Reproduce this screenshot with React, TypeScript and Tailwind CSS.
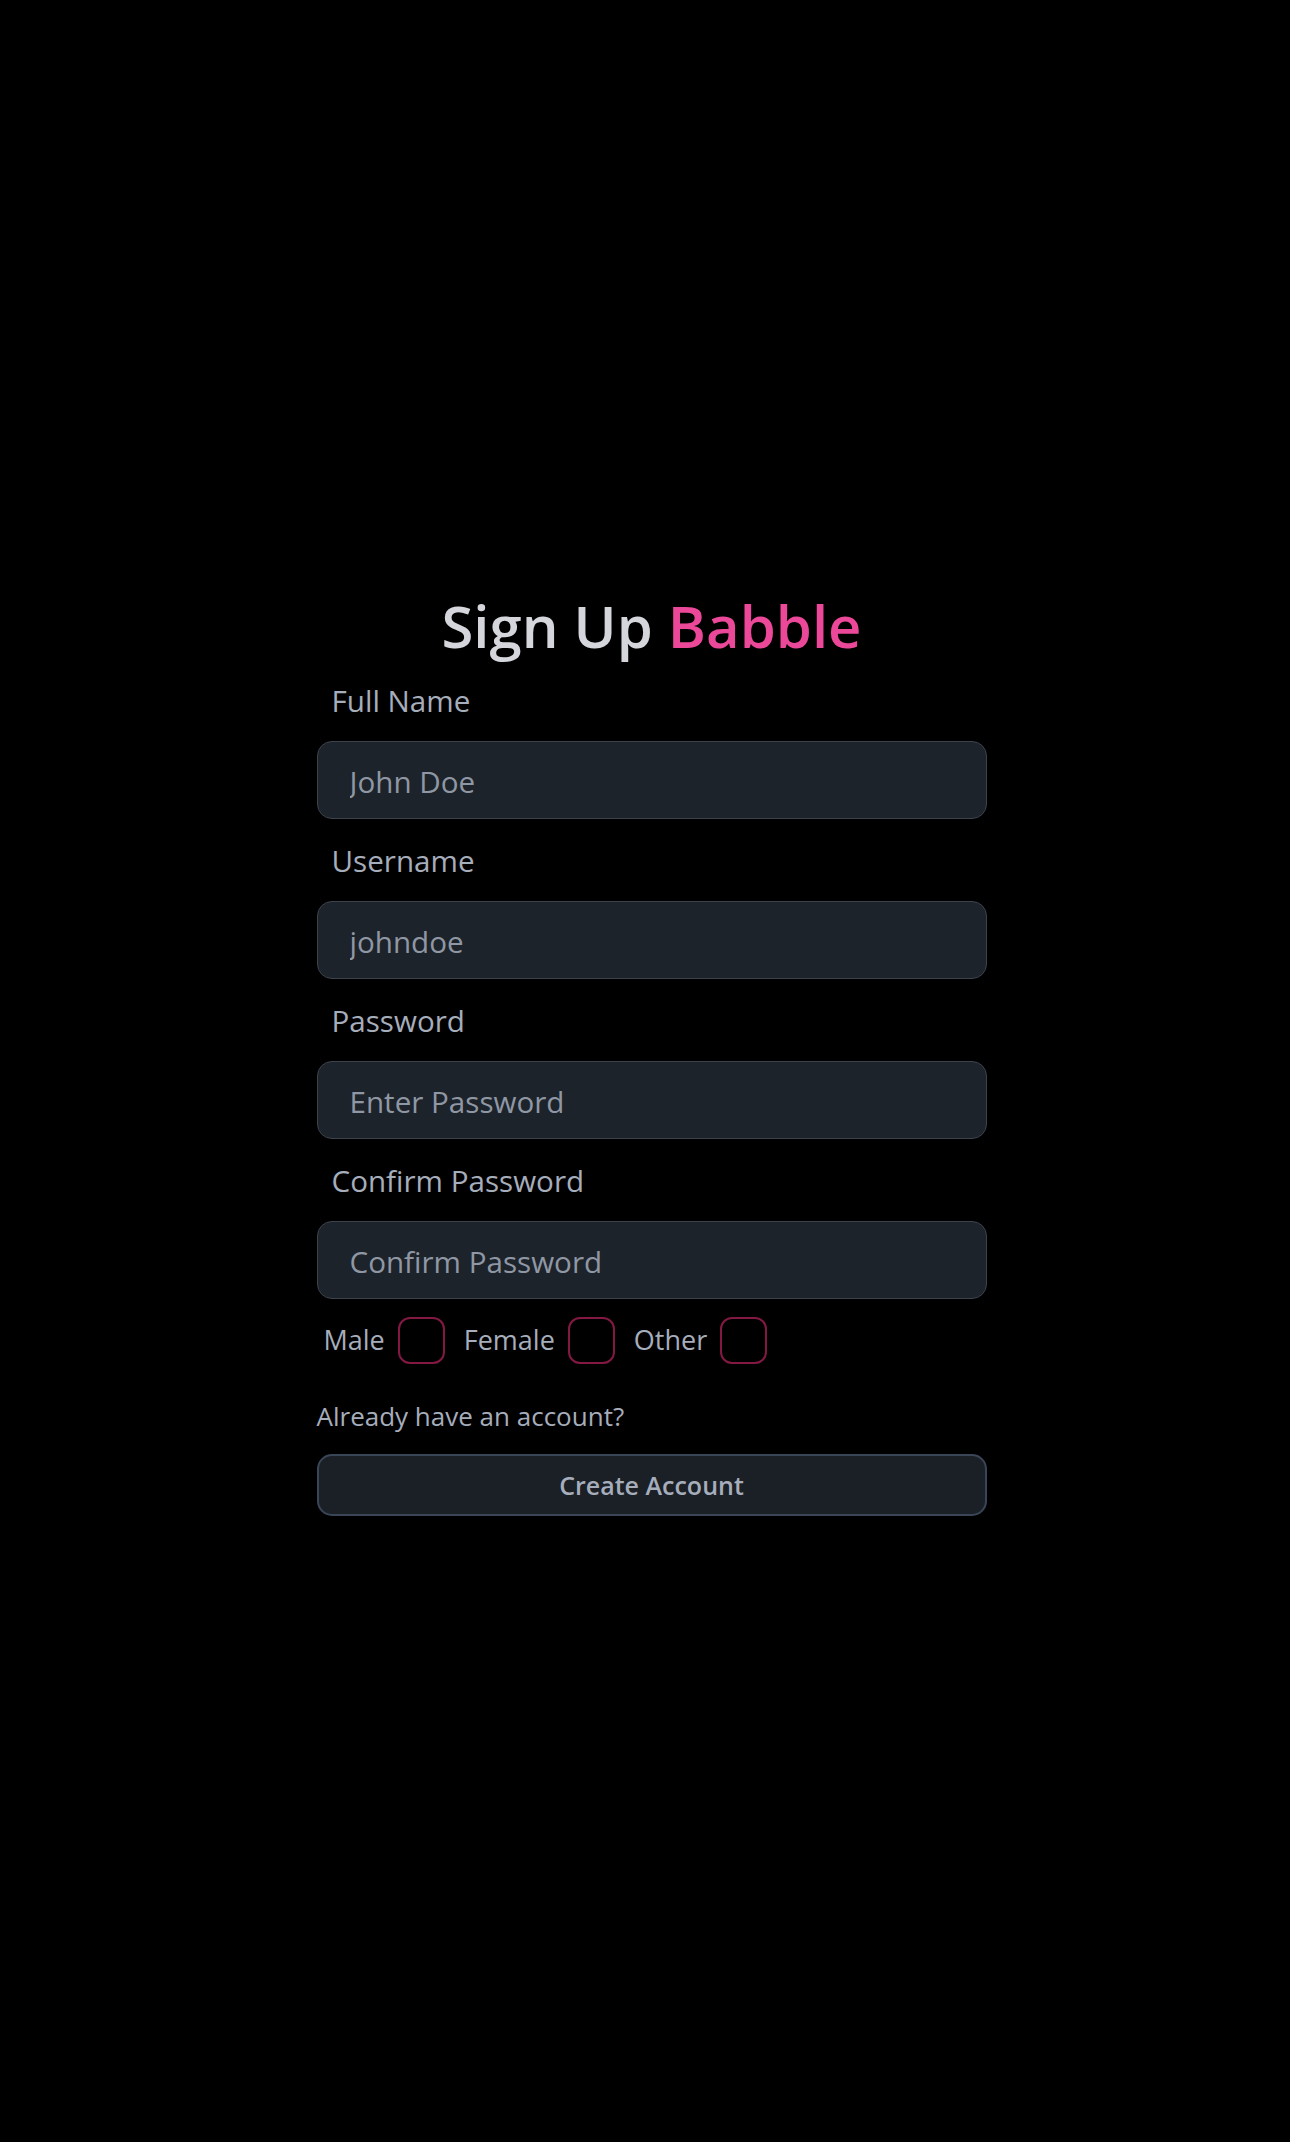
import { useState } from "react";

const fields = [
    { label: "Full Name", placeholder: "John Doe", type: "text" },
    { label: "Username", placeholder: "johndoe", type: "text" },
    { label: "Password", placeholder: "Enter Password", type: "password" },
    { label: "Confirm Password", placeholder: "Confirm Password", type: "password" },
];

const genders = ["Male", "Female", "Other"];

export default function App() {
    const [gender, setGender] = useState<string | null>(null);

    return (
        <div
            className="min-h-[2142px] bg-black flex justify-center pl-[13px] pt-[591px]"
            style={{ fontFamily: '"Open Sans", "Noto Sans", sans-serif' }}
        >
            <div className="w-[670px] flex flex-col">
                <h1 className="text-center text-[58px] leading-[1.2] font-semibold text-[#d4d6dc]">
                    Sign Up <span className="text-[#ec4899]">Babble</span>
                </h1>

                <form className="flex flex-col mt-[17px]" onSubmit={(e) => e.preventDefault()}>
                    {fields.map((field, index) => (
                        <div key={field.label} className={index > 0 ? "flex flex-col mt-[19px]" : "flex flex-col"}>
                            <label className="pl-[15px] h-[45px] text-[29.6px] leading-[45px] text-[#a6adbb]">
                                {field.label}
                            </label>
                            <input
                                type={field.type}
                                placeholder={field.placeholder}
                                className="mt-[18px] h-[78px] w-full rounded-[15px] border border-[#3d434b] bg-[#1d232a] pl-[32px] pr-4 pt-[4px] text-[29.6px] text-[#a6adbb] placeholder:text-[#8f97a4] outline-none"
                            />
                        </div>
                    ))}

                    {/* Gender */}
                    <div className="flex items-center gap-[5px] mt-[18px]">
                        {genders.map((g) => (
                            <label key={g} className="flex items-center gap-[13px] px-[7px] cursor-pointer">
                                <span className="text-[27px] text-[#a6adbb]">{g}</span>
                                <span
                                    onClick={() => setGender(g)}
                                    className={`w-[47px] h-[47px] rounded-[12px] border-2 border-[#831843] ${gender === g ? "bg-[#831843]" : ""}`}
                                />
                            </label>
                        ))}
                    </div>

                    <a href="#" className="mt-[33px] text-[26px] leading-[39px] text-[#a6adbb]">
                        Already have an account?
                    </a>

                    <button className="mt-[18px] h-[62px] w-full rounded-[15px] border-2 border-[#3a4657] bg-[#1b1f26] pt-[2px] text-[25px] font-semibold text-[#a6adbb]">
                        Create Account
                    </button>
                </form>
            </div>
        </div>
    );
}
